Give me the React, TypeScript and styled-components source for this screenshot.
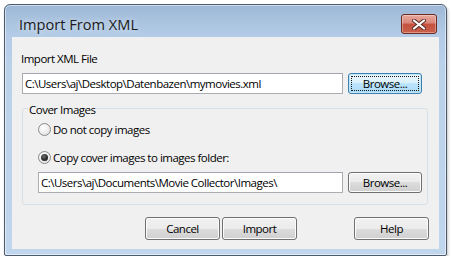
import React from 'react';
import styled, { createGlobalStyle } from 'styled-components';

const GlobalStyle = createGlobalStyle`
  html, body {
    margin: 0;
    padding: 0;
    background: #ffffff;
  }
  body {
    font-family: "Segoe UI", "Open Sans", "DejaVu Sans", sans-serif;
    font-size: 11.5px;
    letter-spacing: -0.5px;
    color: #000;
  }
`;

const Window = styled.div`
  box-sizing: border-box;
  margin: 4px 0 0 4px;
  width: 443px;
  height: 252px;
  border: 1px solid #4c5c6e;
  border-radius: 6px 6px 2px 2px;
  background: linear-gradient(180deg, #9db8d7 0px, #b3cbe6 30px, #bad1ea 60px, #c0d6ed 100%);
  box-shadow: 0 0 0 1px rgba(255, 255, 255, 0.5) inset, 1px 2px 3px rgba(0, 0, 0, 0.25);
  padding: 0 7px 6px 7px;
  display: flex;
  flex-direction: column;
`;

const TitleBar = styled.div`
  height: 32px;
  display: flex;
  align-items: flex-start;
  justify-content: space-between;
  padding: 0 2px 0 7px;
`;

const Title = styled.div`
  font-family: "Segoe UI", "Open Sans", sans-serif;
  font-size: 14.6px;
  letter-spacing: 0;
  line-height: 20px;
  margin-top: 9px;
  color: #1a1a1a;
  text-shadow: 0 0 6px rgba(255, 255, 255, 0.8);
`;

const CloseButton = styled.div`
  box-sizing: border-box;
  margin-top: 9px;
  width: 36px;
  height: 20px;
  border: 1px solid #6b2a22;
  border-radius: 3px;
  background: linear-gradient(180deg, #e8a89c 0%, #d9877a 45%, #c4523f 50%, #c9604b 100%);
  box-shadow: inset 0 0 0 1px rgba(255, 255, 255, 0.35);
  display: flex;
  align-items: center;
  justify-content: center;
`;

const Content = styled.div`
  flex: 1;
  background: #f0f0f0;
  padding: 14px 10px 0 10px;
  display: flex;
  flex-direction: column;
`;

const Label = styled.div`
  line-height: 15px;
  margin-left: -1px;
`;

const FieldRow = styled.div<{ $top: number }>`
  display: flex;
  gap: 5px;
  margin-top: ${(p) => p.$top}px;
`;

const TextField = styled.input<{ $width: number }>`
  box-sizing: border-box;
  width: ${(p) => p.$width}px;
  height: 21px;
  border: 1px solid #abadb3;
  border-top-color: #a2a5ad;
  background: #ffffff;
  padding: 0 2px;
  margin: 0;
  font-family: inherit;
  font-size: inherit;
  letter-spacing: inherit;
  color: #000;
  outline: none;
`;

const Button = styled.div<{ $width?: number; $height?: number; $focused?: boolean }>`
  box-sizing: border-box;
  width: ${(p) => p.$width ?? 75}px;
  height: ${(p) => p.$height ?? 23}px;
  border: 1px solid ${(p) => (p.$focused ? '#3c7fb1' : '#707070')};
  border-radius: 3px;
  background: ${(p) =>
    p.$focused
      ? 'linear-gradient(180deg, #eaf6fd 0%, #d9f0fc 50%, #bee6fd 50%, #a7d9f5 100%)'
      : 'linear-gradient(180deg, #f2f2f2 0%, #ebebeb 50%, #dddddd 50%, #cfcfcf 100%)'};
  box-shadow: inset 0 0 0 1px ${(p) => (p.$focused ? '#c4e5f6' : '#fcfcfc')};
  display: flex;
  align-items: center;
  justify-content: center;
  position: relative;
  line-height: 15px;
  color: #000;
`;

const FocusRing = styled.span`
  position: absolute;
  inset: 2px;
  border: 1px dotted #1a1a1a;
`;

const Group = styled.div`
  box-sizing: border-box;
  width: 406px;
  height: 97px;
  margin-top: 14px;
  border: 1px solid #d5dfe5;
  border-radius: 3px;
  padding: 0 5px 0 15px;
  display: flex;
  flex-direction: column;
`;

const GroupTitle = styled.div`
  align-self: flex-start;
  margin: -7px 0 0 -10px;
  padding: 0 1px;
  background: #f0f0f0;
  line-height: 15px;
`;

const RadioRow = styled.div<{ $top: number }>`
  display: flex;
  align-items: center;
  gap: 2px;
  margin-top: ${(p) => p.$top}px;
  line-height: 15px;
`;

const RadioCircle = styled.span<{ $checked?: boolean }>`
  box-sizing: border-box;
  width: 13px;
  height: 13px;
  border-radius: 50%;
  border: 1px solid #8a8a8a;
  background: radial-gradient(circle at 40% 35%, #ffffff 0%, #f0f0f0 45%, #d6d6d6 100%);
  display: flex;
  align-items: center;
  justify-content: center;

  &::after {
    content: '';
    display: ${(p) => (p.$checked ? 'block' : 'none')};
    width: 7px;
    height: 7px;
    border-radius: 50%;
    background: radial-gradient(circle at 40% 35%, #6b6b6b 0%, #1f1f1f 70%, #111 100%);
  }
`;

const ButtonBar = styled.div`
  display: flex;
  gap: 2px;
  margin-top: 12px;
  padding-left: 123px;
`;

const Spacer = styled.div`
  flex: 1;
`;

export default function App() {
  return (
    <>
      <GlobalStyle />
      <Window>
        <TitleBar>
          <Title>Import From XML</Title>
          <CloseButton>
            <svg width="14" height="11" viewBox="0 0 14 11">
              <path
                d="M2 1.5 L12 9.5 M12 1.5 L2 9.5"
                stroke="#5a2a24"
                strokeWidth="4"
                strokeLinecap="round"
              />
              <path
                d="M2 1.5 L12 9.5 M12 1.5 L2 9.5"
                stroke="#ffffff"
                strokeWidth="2.2"
                strokeLinecap="round"
              />
            </svg>
          </CloseButton>
        </TitleBar>
        <Content>
          <Label>Import XML File</Label>
          <FieldRow $top={7}>
            <TextField $width={321} readOnly value="C:\Users\aj\Desktop\Datenbazen\mymovies.xml" />
            <Button $width={74} $height={21} $focused>
              <FocusRing />
              Browse...
            </Button>
          </FieldRow>
          <Group>
            <GroupTitle>Cover Images</GroupTitle>
            <RadioRow $top={5}>
              <RadioCircle />
              <span>Do not copy images</span>
            </RadioRow>
            <RadioRow $top={13}>
              <RadioCircle $checked />
              <span>Copy cover images to images folder:</span>
            </RadioRow>
            <FieldRow $top={7}>
              <TextField $width={305} readOnly value="C:\Users\aj\Documents\Movie Collector\Images\" />
              <Button $width={74} $height={21}>
                Browse...
              </Button>
            </FieldRow>
          </Group>
          <ButtonBar>
            <Button>Cancel</Button>
            <Button>Import</Button>
            <Spacer />
            <Button>Help</Button>
          </ButtonBar>
        </Content>
      </Window>
    </>
  );
}
